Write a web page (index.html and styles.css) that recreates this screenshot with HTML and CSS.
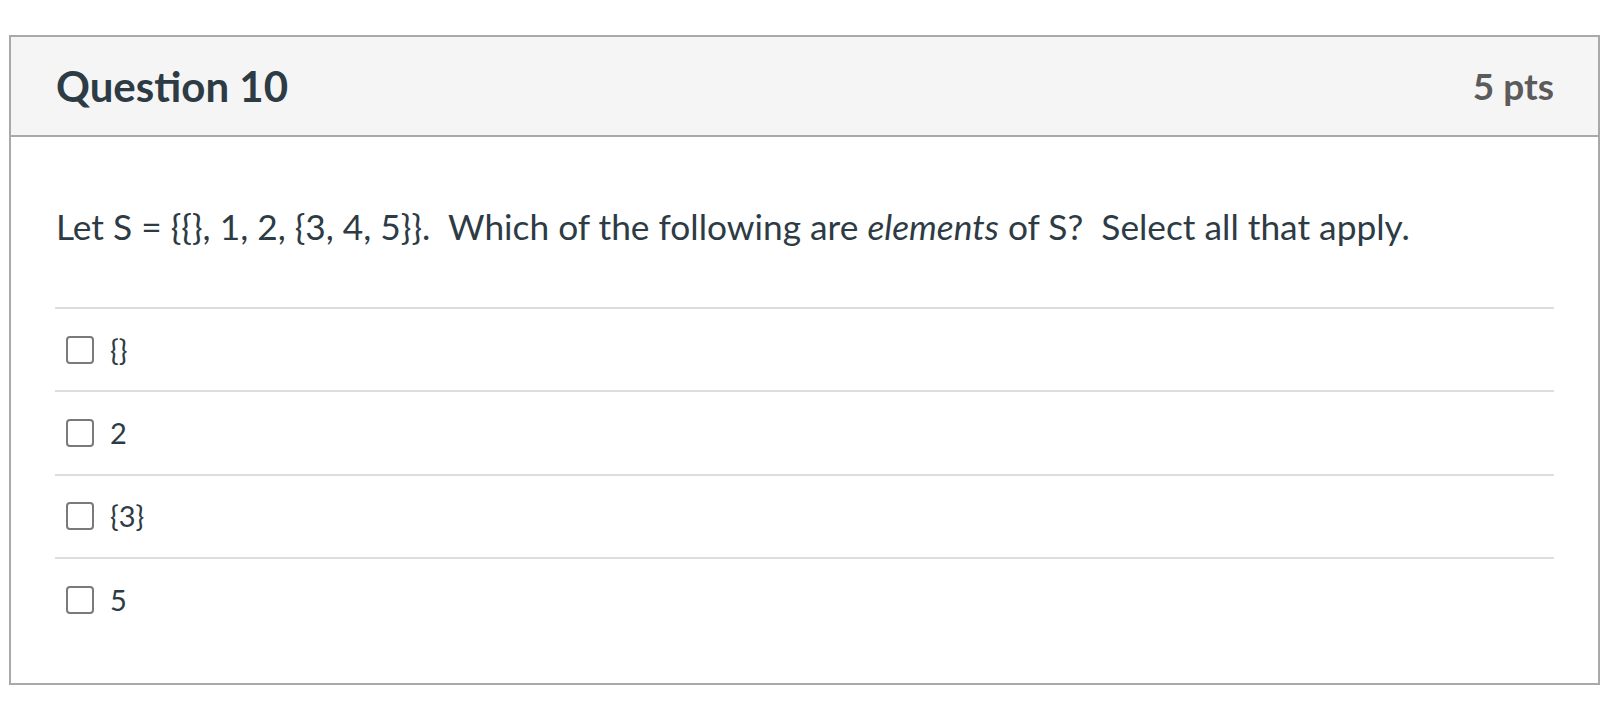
FILE: index.html
```html
<!DOCTYPE html>
<html lang="en">
<head>
<meta charset="utf-8">
<title>Question 10</title>
<link rel="stylesheet" href="styles.css">
</head>
<body>
  <div class="question">
    <div class="question-header">
      <h2 class="question-title">Question 10</h2>
      <div class="question-points">5 pts</div>
    </div>
    <div class="question-body">
      <p class="question-text">Let S = {{}, 1, 2, {3, 4, 5}}.&nbsp; Which of the following are <em>elements</em> of S?&nbsp; Select all that apply.</p>
      <div class="answers">
        <label class="answer"><span class="checkbox"></span><span class="answer-label">{}</span></label>
        <label class="answer"><span class="checkbox"></span><span class="answer-label">2</span></label>
        <label class="answer"><span class="checkbox"></span><span class="answer-label">{3}</span></label>
        <label class="answer"><span class="checkbox"></span><span class="answer-label">5</span></label>
      </div>
    </div>
  </div>
</body>
</html>
```

FILE: styles.css
```css
html, body {
  margin: 0;
  background: #ffffff;
}

body {
  padding: 35px 16px 0 9px;
  font-family: "Lato", "Noto Sans", sans-serif;
  color: #2d3b45;
}

.question {
  width: 1591px;
  box-sizing: border-box;
  border: 2px solid #a9a9a9;
  background: #ffffff;
}

.question-header {
  height: 100px;
  box-sizing: border-box;
  padding: 0 44px 0 45px;
  background: #f5f5f5;
  border-bottom: 2px solid #a9a9a9;
  display: flex;
  align-items: center;
  justify-content: space-between;
}

.question-title {
  margin: 0;
  font-size: 42px;
  font-weight: 700;
  line-height: 48px;
  color: #2d3b45;
}

.question-points {
  font-size: 37px;
  font-weight: 700;
  line-height: 48px;
  color: #5b5b5b;
}

.question-body {
  padding: 68px 44px 43px;
}

.question-text {
  margin: 0 0 59px;
  padding-left: 1px;
  font-size: 35.3px;
  line-height: 43px;
  color: #2d3b45;
}

.question-text em {
  font-style: italic;
}

.answers {
  display: flex;
  flex-direction: column;
}

.answer {
  display: flex;
  align-items: center;
  height: 83.3px;
  box-sizing: border-box;
  border-top: 2px solid #dddddd;
  padding-left: 11px;
}

.checkbox {
  width: 28px;
  height: 28px;
  box-sizing: border-box;
  border: 2px solid #7a7a7a;
  border-radius: 4px;
  background: #ffffff;
  flex: none;
}

.answer-label {
  margin-left: 16px;
  font-size: 29px;
  line-height: 34px;
  color: #2d3b45;
}
```
